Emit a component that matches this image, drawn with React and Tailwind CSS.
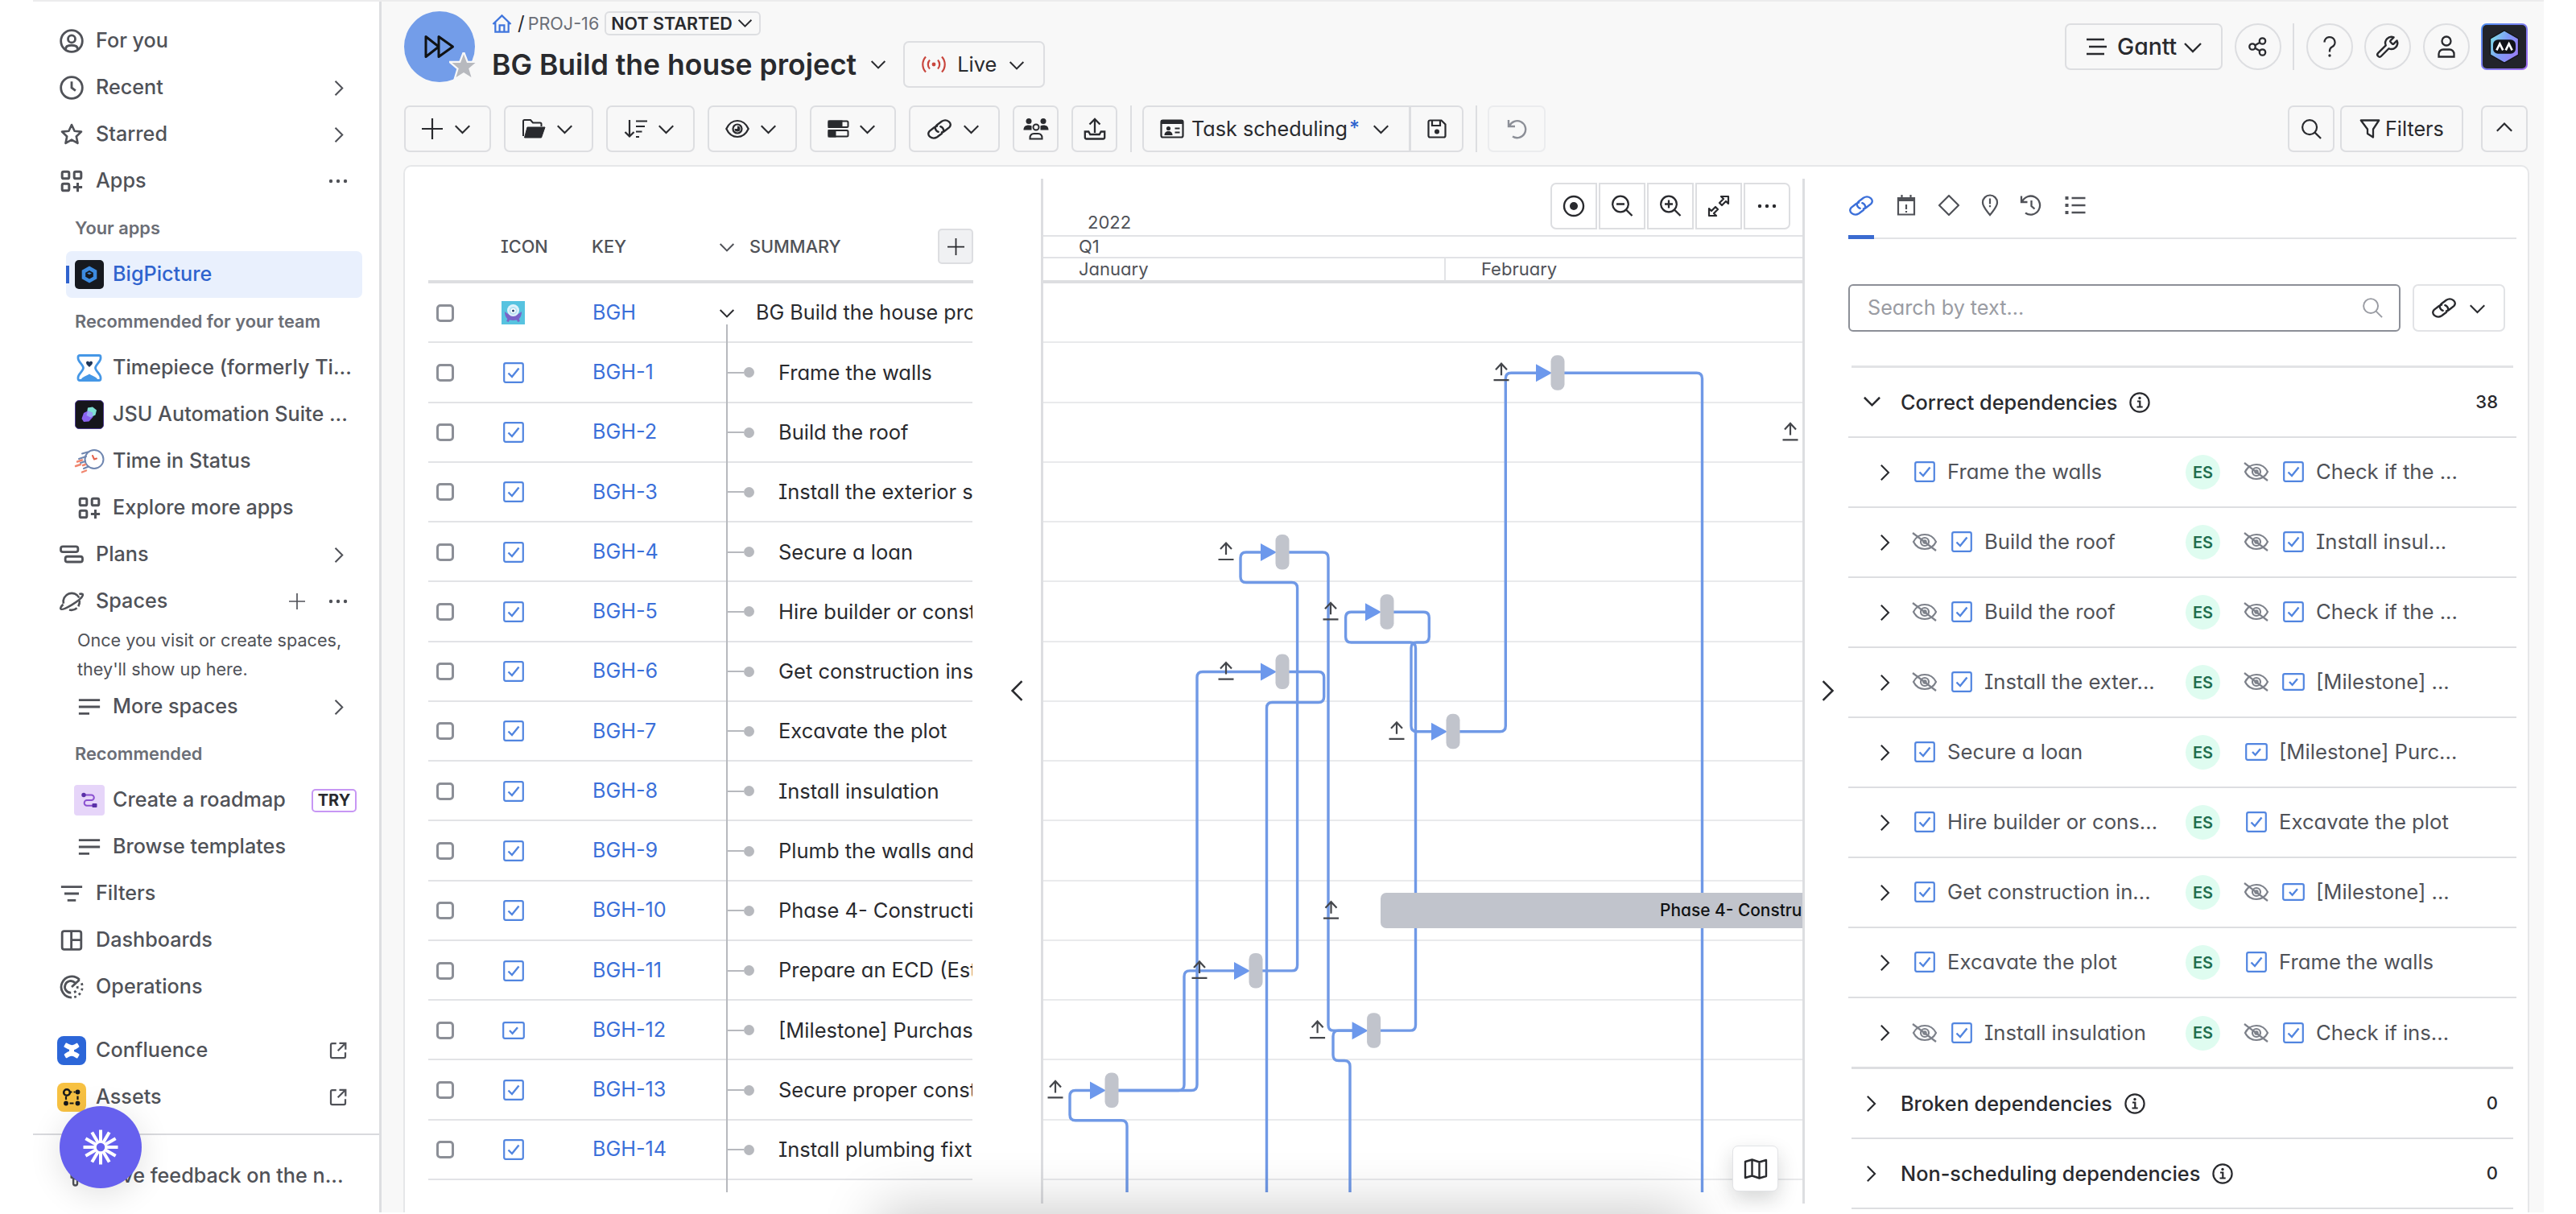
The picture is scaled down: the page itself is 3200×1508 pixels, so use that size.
import React from 'react';

/* ---------- icons ---------- */

function Svg({ w = 30, h, vb = '0 0 16 16', sw = 1.5, fill = 'none', className = '', children }) {
  return (
    <svg
      width={w}
      height={h || w}
      viewBox={vb}
      fill={fill}
      stroke="currentColor"
      strokeWidth={sw}
      strokeLinecap="butt"
      strokeLinejoin="miter"
      className={'shrink-0 ' + className}
    >
      {children}
    </svg>
  );
}

const Chevron = ({ w = 20, dir = 'down', sw = 2.4, className = '' }) => {
  const d = {
    down: 'M2 6 L12 16 L22 6',
    up: 'M2 16 L12 6 L22 16',
    right: 'M7 1 L18 12 L7 23',
    left: 'M18 1 L7 12 L18 23',
  }[dir];
  return (
    <Svg w={w} vb="0 0 24 24" sw={sw} className={className}>
      <path d={d} />
    </Svg>
  );
};

const Dots = ({ className = '' }) => (
  <Svg w={24} h={6} vb="0 0 24 6" fill="currentColor" sw={0} className={className}>
    <circle cx="3" cy="3" r="2.2" />
    <circle cx="12" cy="3" r="2.2" />
    <circle cx="21" cy="3" r="2.2" />
  </Svg>
);

const PersonCircle = () => (
  <Svg>
    <circle cx="8" cy="8" r="7.1" />
    <circle cx="8" cy="6.6" r="2.4" />
    <path d="M4 13.4c0-2 1.400-2.600 4-2.600s4 .6 4 2.600" />
  </Svg>
);

const Clock = () => (
  <Svg>
    <circle cx="8" cy="8" r="7.1" />
    <path d="M8 3.800V8l2.600 1.900" />
  </Svg>
);

const StarOutline = () => (
  <Svg sw={1.4}>
    <path strokeLinejoin="round" d="M8 1.600l1.900 4.100 4.500.5-3.300 3.100.9 4.500L8 11.500l-4 2.300.9-4.500L1.600 6.200l4.500-.5z" />
  </Svg>
);

const AppsIcon = ({ w = 30 }) => (
  <Svg w={w} sw={1.6}>
    <rect x="1.700" y="1.700" width="4.600" height="4.600" rx="1" />
    <rect x="9.700" y="1.700" width="4.600" height="4.600" rx="1" />
    <rect x="1.700" y="9.700" width="4.600" height="4.600" rx="1" />
    <path d="M12 9v6M9 12h6" />
  </Svg>
);

const PlansIcon = () => (
  <Svg>
    <rect x="0.800" y="2.600" width="11.400" height="3.600" rx="1.400" />
    <rect x="3.800" y="9.200" width="11.400" height="3.600" rx="1.400" />
  </Svg>
);

const Planet = () => (
  <Svg sw={1.4}>
    <path d="M2.600 9.500A5.600 5.600 0 0 1 13 5.600" />
    <path d="M11.500 12.400A5.600 5.600 0 0 1 6.400 13.600" />
    <path d="M13 3.200c1.500-.4 2.500-.2 2.400.6-.2 1.700-3.500 4.200-7.300 6.500C4.700 12.300 1.400 13.900.8 13c-.4-.6.300-1.700 1.600-3" />
    <path d="M13.200 7.500A5.600 5.600 0 0 1 12.400 11.300" />
  </Svg>
);

const LinesIcon = () => (
  <Svg>
    <path d="M1 3.500h14M1 8h14M1 12.500h7" />
  </Svg>
);

const FilterLines = () => (
  <Svg>
    <path d="M1 3.500h14M3.200 8h9.600M5.200 12.500h5.600" />
  </Svg>
);

const DashboardIcon = () => (
  <Svg>
    <rect x="1.700" y="1.900" width="12.600" height="12.200" rx="1.400" />
    <path d="M7.800 2v12M7.800 7.800h6.500" />
  </Svg>
);

const OperationsIcon = () => (
  <Svg sw={1.5}>
    <path d="M13.200 3.200A7 7 0 1 0 8 15" />
    <path d="M10.200 5.200A3.900 3.900 0 1 0 7.600 11.800" />
    <path d="M8 8l5.200-4.800" />
    <path strokeDasharray="1.500 1.900" d="M14.600 5.500A7 7 0 0 1 9.500 14.800" />
    <path strokeDasharray="1.500 1.800" d="M11.800 7.500A3.900 3.900 0 0 1 9 11.800" />
  </Svg>
);

const External = () => (
  <Svg w={24} sw={1.5} className="mr-[3px]">
    <path d="M6.500 2H3.200A1.200 1.200 0 0 0 2 3.200v9.600A1.200 1.200 0 0 0 3.200 14h9.600a1.200 1.200 0 0 0 1.200-1.200V9.500M9 1.900h5.200v5.200M14 2L7.800 8.200" />
  </Svg>
);

const Plus = ({ w = 24, sw = 2 }) => (
  <Svg w={w} vb="0 0 24 24" sw={sw}>
    <path d="M12 0v24M0 12h24" />
  </Svg>
);

const BigPictureLogo = () => (
  <div className="flex size-9 items-center justify-center rounded-[5px] bg-[#16191f]">
    <svg width="20" height="22" viewBox="0 0 20 22">
      <path d="M10 .5l9.300 5.200v10.600L10 21.500.7 16.300V5.700z" fill="#3d8be0" />
      <path d="M10 6l4.800 2.700v5L10 16.400l-4.800-2.700v-5z" fill="#16191f" />
      <path d="M7 9.500l3 1.500 3-1.500-3-1.300z" fill="#3d8be0" />
    </svg>
  </div>
);

const Hourglass = () => (
  <svg width="36" height="36" viewBox="0 0 36 36" fill="none">
    <path
      d="M6 2.500h24a2 2 0 0 1 2 2v1.500c0 4.500-6.500 8-6.500 12s6.500 7.500 6.500 12v1.500a2 2 0 0 1-2 2H6a2 2 0 0 1-2-2V30c0-4.500 6.500-8 6.500-12S4 10.500 4 6V4.500a2 2 0 0 1 2-2z"
      stroke="#4597e6"
      strokeWidth="2.800"
      strokeLinejoin="round"
    />
    <path d="M8 32c1-3 6-3.500 10-6.500 4 3 9 3.500 10 6.500z" fill="#4597e6" />
    <path d="M14 11.500c0-2 3-2.500 4-.5 1-2 4-1.500 4 .5 0 2.500-2.500 3.500-4 5.500-1.500-2-4-3-4-5.500z" fill="#1d3557" />
  </svg>
);

const JsuLogo = () => (
  <div className="flex size-9 items-center justify-center rounded-[5px] border border-[#4b3a8f] bg-[#16161c]">
    <svg width="22" height="22" viewBox="0 0 22 22">
      <path d="M9 2.500l6-1 5 4-1.500 6-6 3-5-2.500z" fill="#7fe0d4" />
      <path d="M4 9l5-2.500 5.500 2 1 5.500-5 5.500-6.500.5L1.500 16z" fill="#8a63f0" />
      <path d="M9 6.500l5.500 2 1 4.500-3 1.500-5-2.500z" fill="#9ba4f5" />
    </svg>
  </div>
);

const TimeInStatus = () => (
  <svg width="38" height="34" viewBox="0 0 38 34" fill="none" strokeLinecap="round">
    <circle cx="25" cy="14.500" r="11.500" stroke="#6f86b0" strokeWidth="2" />
    <path d="M25 14.500l-2-4.500M25 14.500l3-1" stroke="#e3614c" strokeWidth="2" />
    <path d="M17 5.500L10 7.500M15 11L6 14M14 17L8 19M18 23.500L12 26" stroke="#6f86b0" strokeWidth="2" />
    <path d="M4 17.500l6-2M2 23l6-2M10 30.500l5-2M11 22l3-1" stroke="#f08770" strokeWidth="2.400" />
  </svg>
);

const RoadmapIcon = () => (
  <div className="flex size-[38px] items-center justify-center rounded-[4px] bg-[#e6d5f9]">
    <svg width="22" height="22" viewBox="0 0 22 22" fill="none">
      <path d="M4 4.500h9.500a3.300 3.300 0 0 1 0 6.600H8a3.300 3.300 0 0 0 0 6.600h9" stroke="#8a4fd0" strokeWidth="2" />
      <circle cx="4" cy="4.500" r="2.700" fill="#5a30a8" />
      <rect x="14.500" y="15" width="6" height="5" rx="1" fill="#5a30a8" />
    </svg>
  </div>
);

const ConfluenceLogo = () => (
  <div className="flex size-9 items-center justify-center rounded-[8px] bg-[#2c66d8]">
    <svg width="22" height="20" viewBox="0 0 22 20" fill="#fff">
      <path d="M1.500 4.500L3.500 1c.3-.5.800-.6 1.300-.4 2.500 1.200 4.500 2.600 6.400 2.600S15 2.200 17 .8c.5-.3 1-.2 1.300.3l2 3.400c.2.5.1.900-.3 1.200C17 8 14.500 9.400 11.200 9.400S5 7.500 1.900 5.700c-.5-.300-.6-.800-.4-1.200z" />
      <path d="M20.500 15.500l-2 3.500c-.3.500-.8.600-1.300.4-2.500-1.200-4.200-2.600-6.200-2.600s-3.800 1-5.900 2.400c-.5.300-1 .2-1.300-.3l-2-3.400c-.2-.5-.1-.9.300-1.200C5 12 7.500 10.600 10.800 10.600s6.200 1.900 9.300 3.700c.5.3.6.8.4 1.200z" />
      <path d="M8 8h6v4H8z" />
    </svg>
  </div>
);

const AssetsLogo = () => (
  <div className="flex size-9 items-center justify-center rounded-[8px] bg-[#f7c142]">
    <svg width="24" height="24" viewBox="0 0 24 24" fill="#16181c" stroke="#16181c">
      <circle cx="6" cy="6" r="3.800" fill="none" strokeWidth="2.600" />
      <circle cx="19.500" cy="5.500" r="2.900" strokeWidth="0" />
      <circle cx="5" cy="19.500" r="2.900" strokeWidth="0" />
      <circle cx="19.500" cy="19.500" r="2.900" strokeWidth="0" />
      <path d="M10 5.500h2.500M14.500 5.500h2M5 11v4M19.500 10.500v4.500M9.500 19.500h5" strokeWidth="2.200" />
    </svg>
  </div>
);

const Megaphone = () => (
  <Svg w={26}>
    <path d="M3.500 5.500L14 1.500v11L3.500 9z M5 9.800v3.800a1.500 1.500 0 0 0 3 0v-2.600" />
  </Svg>
);

const LinkIcon = () => (
  <svg width="32" height="25" viewBox="2.500 2.500 27 27" preserveAspectRatio="none" fill="none" stroke="currentColor" className="shrink-0">
    <path
      strokeLinecap="round"
      strokeWidth="2.400"
      vectorEffect="non-scaling-stroke"
      d="M18.500 20.200c1.300-.4 2-.9 2.900-1.800l5-5a5.700 5.700 0 0 0-8-8l-5 5a5.700 5.700 0 0 0 1.500 9.200M13.500 11.800c-1.300.4-2 .9-2.900 1.800l-5 5a5.700 5.700 0 0 0 8 8l5-5a5.700 5.700 0 0 0-1.500-9.200"
    />
  </svg>
);

const CheckBoxIcon = ({ wide }) =>
  wide ? (
    <Svg w={28} h={22} vb="0 0 28 22" sw={2.200} className="text-[#5185e0]">
      <rect x="1.200" y="1.200" width="25.600" height="19.600" rx="2" />
      <path d="M9 11l3.600 3.800L19 7.200" strokeWidth="2.400" />
    </Svg>
  ) : (
    <Svg w={26} h={26} vb="0 0 26 26" sw={2.200} className="text-[#5185e0]">
      <rect x="1.200" y="1.200" width="23.600" height="23.600" rx="2" />
      <path d="M6.500 13.500l4.500 4.500 8.500-10.500" strokeWidth="2.400" />
    </Svg>
  );

const EyeOff = () => (
  <Svg w={32} h={26} vb="0 0 32 26" sw={2.200} className="text-[#7d818a]">
    <path d="M2 13c3-6 8-9 14-9s11 3 14 9c-3 6-8 9-14 9S5 19 2 13z" />
    <circle cx="16" cy="13" r="5" />
    <circle cx="16" cy="13" r="1.600" />
    <path d="M1 2l29 22" />
  </Svg>
);

const Info = () => (
  <Svg w={26} vb="0 0 26 26" sw={2.200} className="text-[#292a2e]">
    <circle cx="13" cy="13" r="11.600" />
    <path d="M10 11.500h3.300v7M9.500 18.500h7.200" />
    <circle cx="13" cy="7.500" r="1.700" fill="currentColor" strokeWidth="0" />
  </Svg>
);

const Search = ({ w = 28, sw = 2.300 }) => (
  <Svg w={w} vb="0 0 28 28" sw={sw}>
    <circle cx="11.500" cy="11.500" r="9.300" />
    <path d="M18 18l8 8" />
  </Svg>
);

const ZoomGlass = ({ plus }) => (
  <Svg w={28} vb="0 0 28 28" sw={2.300}>
    <circle cx="12" cy="11.500" r="9.800" />
    <path d="M19 18.500l7.500 7.500M7 11.500h10" />
    {plus && <path d="M12 6.500v10" />}
  </Svg>
);

/* ---------- sidebar ---------- */

function NavItem({ icon, label, right, indent, className = '' }) {
  return (
    <div className={'flex h-[58px] items-center pr-[36px] ' + (indent ? 'pl-[51px] ' : 'pl-[29px] ') + className}>
      <div className="flex w-[38px] shrink-0 items-center justify-center">{icon}</div>
      <span className={'text-[25.2px] font-medium whitespace-nowrap ' + (indent ? 'ml-[10px]' : 'ml-[11px]')}>{label}</span>
      <div className="ml-auto flex items-center">{right}</div>
    </div>
  );
}

const NavHeading = ({ children }) => (
  <div className="flex h-[58px] items-center pl-[52px] text-[21.8px] font-semibold whitespace-nowrap text-[#6b6e76]">{children}</div>
);

const RightChevron = () => (
  <div className="mr-[5px]">
    <Chevron w={19} dir="right" sw={2.600} />
  </div>
);

function Sidebar() {
  return (
    <aside className="relative ml-[41px] h-[1506px] w-[433px] shrink-0 border-r-[3px] border-[#dddee1] bg-white pt-[22px] text-[#505258]">
      <NavItem icon={<PersonCircle />} label="For you" />
      <NavItem icon={<Clock />} label="Recent" right={<RightChevron />} />
      <NavItem icon={<StarOutline />} label="Starred" right={<RightChevron />} />
      <NavItem icon={<AppsIcon />} label="Apps" right={<Dots className="mr-[3px]" />} />
      <NavHeading>Your apps</NavHeading>
      <div className="ml-[41px] flex h-[58px] w-[368px] items-center rounded-[7px] bg-[#e9f0fd] text-[#2f63ce]">
        <div className="h-[22px] w-[4px] bg-[#2f63ce]" />
        <div className="ml-[7px]">
          <BigPictureLogo />
        </div>
        <span className="ml-[11px] text-[25.2px] font-medium">BigPicture</span>
      </div>
      <NavHeading>Recommended for your team</NavHeading>
      <NavItem indent icon={<Hourglass />} label="Timepiece (formerly Ti..." className="-mr-[10px]" />
      <NavItem indent icon={<JsuLogo />} label="JSU Automation Suite ..." />
      <NavItem indent icon={<TimeInStatus />} label="Time in Status" />
      <NavItem indent icon={<AppsIcon />} label="Explore more apps" />
      <NavItem icon={<PlansIcon />} label="Plans" right={<RightChevron />} />
      <NavItem
        icon={<Planet />}
        label="Spaces"
        right={
          <div className="mr-[3px] flex items-center gap-[29px]">
            <Plus w={20} />
            <Dots />
          </div>
        }
      />
      <div className="h-[73px] pt-[1px] pl-[55px] text-[21.6px] leading-[36px] whitespace-nowrap">
        Once you visit or create spaces,
        <br />
        they'll show up here.
      </div>
      <NavItem indent icon={<LinesIcon />} label="More spaces" right={<RightChevron />} />
      <NavHeading>Recommended</NavHeading>
      <NavItem
        indent
        icon={<RoadmapIcon />}
        label="Create a roadmap"
        right={
          <div className="-mr-[8px] flex h-[29px] w-[56px] items-center justify-center rounded-[5px] border-2 border-[#c797f4] text-[20px] font-bold text-[#292a2e]">
            TRY
          </div>
        }
      />
      <NavItem indent icon={<LinesIcon />} label="Browse templates" />
      <NavItem icon={<FilterLines />} label="Filters" />
      <NavItem icon={<DashboardIcon />} label="Dashboards" />
      <NavItem icon={<OperationsIcon />} label="Operations" />
      <div className="h-[21px]" />
      <NavItem icon={<ConfluenceLogo />} label="Confluence" right={<External />} />
      <NavItem icon={<AssetsLogo />} label="Assets" right={<External />} />
      <div className="mt-[16px] mb-[22px] h-[2px] bg-[#d9dadd]" />
      <NavItem icon={<Megaphone />} label="Give feedback on the n..." className="pl-[36px]! pr-0!" />
      <div className="absolute top-[1374px] left-[33px] flex size-[102px] items-center justify-center rounded-full bg-[#6660ee] shadow-[0_8px_40px_rgba(0,0,0,0.12)]">
        <svg width="44" height="44" viewBox="-22 -22 44 44" stroke="#fff" strokeWidth="4">
          {[0, 30, 60, 90, 120, 150, 180, 210, 240, 270, 300, 330].map((a) => (
            <path key={a} d="M6 0H21.500" transform={`rotate(${a})`} />
          ))}
          <circle r="6.500" fill="#6660ee" strokeWidth="2.500" />
        </svg>
      </div>
    </aside>
  );
}

/* ---------- header ---------- */

const btn = 'flex h-[58px] shrink-0 items-center rounded-[7px] border-2 border-[#dddee1] bg-[#f8f8f8]';

function Header() {
  return (
    <header className="flex h-[117px] items-start">
      <div className="relative mt-[14px] ml-[28px] flex size-[88px] items-center justify-center rounded-full bg-[#739de9] text-[#101214]">
        <Svg w={40} h={30} vb="0 0 40 30" sw={3}>
          <path strokeLinejoin="round" d="M3 2.500v25L19 15z M19 2.500v25L36.500 15z" />
        </Svg>
        <svg width="36" height="34" viewBox="0 0 36 34" className="absolute top-[51px] left-[56px]">
          <path
            d="M18 2.500l4 10.500h10.500l-8.300 7 3.300 11L18 25l-9.500 6 3.300-11-8.300-7H14z"
            fill="#b7b9be"
            stroke="#f8f8f8"
            strokeWidth="4.500"
            paintOrder="stroke"
          />
        </svg>
      </div>
      <div className="ml-[21px] flex flex-col">
        <div className="mt-[14px] flex h-[30px] items-center">
          <Svg w={25} vb="0 0 26 26" sw={2.300} className="text-[#3f75dd]">
            <path d="M1.500 13.500L13 2.500l11.500 11M4.500 11v12.500h17V11M10 23v-8h6v8" />
          </Svg>
          <span className="ml-[7px] text-[24px]">/</span>
          <span className="ml-[4px] text-[21.6px] text-[#6b6e76]">PROJ-16</span>
          <div className="ml-[7px] flex h-[30px] w-[194px] items-center rounded-[6px] border-2 border-[#dddee1] pl-[6px] text-[21.500px] font-semibold whitespace-nowrap">
            NOT STARTED
            <Chevron w={19} className="ml-[6px]" />
          </div>
        </div>
        <div className="mt-[7px] flex h-[58px] items-center">
          <span className="pt-[1px] text-[35.5px] font-semibold whitespace-nowrap">BG Build the house project</span>
          <Chevron w={20} className="mt-[2px] ml-[17px]" />
          <div className={btn + ' ml-[21px] w-[176px]'}>
            <Svg w={32} vb="0 0 32 32" sw={2.200} className="ml-[20px] text-[#c9463d]">
              <circle cx="16" cy="16" r="2.400" fill="currentColor" strokeWidth="0" />
              <path d="M11 10.500a8 8 0 0 0 0 11M21 10.500a8 8 0 0 1 0 11M6 6.500a14 14 0 0 0 0 19M26 6.500a14 14 0 0 1 0 19" />
            </Svg>
            <span className="ml-[13px] text-[25.400px]">Live</span>
            <Chevron w={20} className="mt-[3px] ml-[15px]" />
          </div>
        </div>
      </div>
      <div className="mt-[29px] mr-[20px] ml-auto flex items-center text-[#292a2e]">
        <div className={btn + ' w-[196px] pl-[24px]'}>
          <Svg w={27} h={24} vb="0 0 27 24" sw={2.600}>
            <path d="M1 3h22M4 12h22M1 21h22" />
          </Svg>
          <span className="ml-[12px] text-[28.3px] font-medium">Gantt</span>
          <Chevron w={24} className="mt-[4px] ml-[8px]" />
        </div>
        <div className={btn + ' ml-[15px] w-[58px] justify-center rounded-full'}>
          <Svg w={26} vb="0 0 26 26" sw={2.300}>
            <circle cx="6" cy="13" r="3.700" />
            <circle cx="18.500" cy="6" r="3.700" />
            <circle cx="18.500" cy="20" r="3.700" />
            <path d="M9.300 11.200l6-3.400M9.300 14.800l6 3.400" />
          </Svg>
        </div>
        <div className="ml-[14px] h-[58px] w-[2px] bg-[#dddee1]" />
        <div className={btn + ' ml-[15px] w-[58px] justify-center rounded-full'}>
          <Svg w={24} h={28} vb="0 0 24 28" sw={2.300}>
            <path d="M5.500 8.500a6.500 6.500 0 1 1 9.500 5.800c-2 1.100-3 2-3 4.700v1.500" />
            <circle cx="12" cy="25" r="1.700" fill="currentColor" strokeWidth="0" />
          </Svg>
        </div>
        <div className={btn + ' ml-[14px] w-[58px] justify-center rounded-full'}>
          <Svg w={32} vb="0 0 24 24" sw={1.800}>
            <path
              strokeLinejoin="round"
              d="M14.700 6.300a1 1 0 0 0 0 1.400l1.600 1.600a1 1 0 0 0 1.400 0l3-3a5.700 5.700 0 0 1-7.600 7.400L6 20.800a2 2 0 0 1-2.900-2.900l7.200-7.100a5.700 5.700 0 0 1 7.400-7.500z"
            />
          </Svg>
        </div>
        <div className={btn + ' ml-[15px] w-[58px] justify-center rounded-full'}>
          <Svg w={24} h={28} vb="0 0 24 28" sw={2.300}>
            <circle cx="12" cy="7" r="5.500" />
            <path d="M2.500 26.500v-3.500a5.500 5.500 0 0 1 5.500-5.500h8a5.500 5.500 0 0 1 5.500 5.500v3.500z" />
          </Svg>
        </div>
        <div className="ml-[14px] size-[58px] rounded-[7px] bg-linear-to-br from-[#4a8df0] to-[#a06bf0] p-[2px]">
          <div className="flex size-full items-center justify-center rounded-[5px] bg-[#22242b]">
            <svg width="40" height="42" viewBox="0 0 44 48">
              <defs>
                <linearGradient id="hex" x1="0" y1="0.200" x2="1" y2="0.700">
                  <stop offset="0" stopColor="#7fe0e6" />
                  <stop offset="0.500" stopColor="#7f9bf8" />
                  <stop offset="1" stopColor="#9a7df5" />
                </linearGradient>
              </defs>
              <path d="M22 1l20 11.500v23L22 47 2 35.500v-23z" fill="url(#hex)" stroke="#14161b" strokeWidth="1.500" />
              <rect x="6" y="14" width="32" height="20" rx="7" fill="#101217" />
              <path d="M11 29l4.500-9 4.500 9M24 29l4.500-9 4.500 9" fill="none" stroke="#fff" strokeWidth="3" />
            </svg>
          </div>
        </div>
      </div>
    </header>
  );
}

function DropBtn({ w, children }) {
  return (
    <div className={btn + ' justify-between pr-[23px] pl-[20px] ' + w}>
      {children}
      <Chevron w={21} className="mt-[3px]" />
    </div>
  );
}

function Toolbar() {
  return (
    <div className="flex h-[88px] items-start gap-[16px] pt-[14px] pr-[20px] pl-[28px] text-[#292a2e]">
      <DropBtn w="w-[108px]">
        <Plus w={26} />
      </DropBtn>
      <DropBtn w="w-[111px]">
        <Svg w={30} h={26} vb="0 0 30 26" sw={2}>
          <path d="M2 22V3.500A1.500 1.500 0 0 1 3.500 2H11l3 3.500h9A1.500 1.500 0 0 1 24.500 7v3" />
          <path d="M7 11h22l-4.500 13H3.500z" fill="currentColor" strokeWidth="1" strokeLinejoin="round" />
        </Svg>
      </DropBtn>
      <DropBtn w="w-[110px]">
        <Svg w={30} h={26} vb="0 0 30 26" sw={2.200}>
          <path d="M7 2v20M1.500 17L7 22.500l5.500-5.500M15 3.500h14M15 10h11M15 16.500h7.500M15 23h4" />
        </Svg>
      </DropBtn>
      <DropBtn w="w-[111px]">
        <Svg w={30} h={26} vb="0 0 30 26" sw={2.200}>
          <path d="M1.300 13c3-6.500 8-10 13.700-10s10.700 3.500 13.700 10c-3 6.500-8 10-13.700 10S4.300 19.500 1.300 13z" />
          <circle cx="15" cy="13" r="5.500" />
          <path d="M15 9.500v3.500h-3.500a3.500 3.500 0 1 0 3.500-3.500z" fill="currentColor" strokeWidth="0" />
        </Svg>
      </DropBtn>
      <DropBtn w="w-[107px]">
        <Svg w={27} h={22} vb="0 0 26 22" sw={2}>
          <rect x="1" y="1.500" width="24" height="7.500" rx="1.500" />
          <path d="M1 1.500h16v7.500H1z" fill="currentColor" />
          <rect x="1" y="13" width="24" height="7.500" rx="1.500" />
          <path d="M1 13h8v7.500H1z" fill="currentColor" />
        </Svg>
      </DropBtn>
      <DropBtn w="w-[113px]">
        <LinkIcon />
      </DropBtn>
      <div className={btn + ' w-[57px] justify-center'}>
        <Svg w={32} h={28} vb="0 0 32 28" sw={2}>
          <circle cx="7" cy="4.500" r="3.500" fill="currentColor" strokeWidth="0" />
          <circle cx="25" cy="4.500" r="3.500" fill="currentColor" strokeWidth="0" />
          <path d="M.5 15.500c0-4 2-6 6.500-6 2.500 0 3.500 1 3.500 1v5zM31.500 15.500c0-4-2-6-6.500-6-2.500 0-3.500 1-3.500 1v5z" fill="currentColor" strokeWidth="0" />
          <circle cx="16" cy="12" r="3.500" />
          <path d="M8.500 26.500v-1c0-3.500 2-5.500 5-5.500h5c3 0 5 2 5 5.500v1z" />
        </Svg>
      </div>
      <div className={btn + ' w-[57px] justify-center'}>
        <Svg w={28} h={28} vb="0 0 28 28" sw={2.300}>
          <path d="M14 19V2.500M7.500 8.500L14 2l6.500 6.500M1.800 17.500v7a2 2 0 0 0 2 2h20.400a2 2 0 0 0 2-2v-7h-4.500l-2 3.500h-11.400l-2-3.500z" />
        </Svg>
      </div>
      <div className="-mr-[3px] h-[58px] w-[2px] shrink-0 bg-[#dddee1]" />
      <div className="flex">
        <div className={btn + ' w-[333px] rounded-r-none pl-[20px]'}>
          <Svg w={30} h={24} vb="0 0 30 24" sw={2.200}>
            <rect x="1.500" y="1.500" width="27" height="21" rx="2" />
            <path d="M1.500 3.500h27" strokeWidth="5" />
            <circle cx="10.500" cy="11.500" r="2.600" fill="currentColor" strokeWidth="0" />
            <path d="M5.500 20c0-3.500 2-5 5-5s5 1.500 5 5z" fill="currentColor" strokeWidth="0" />
            <path d="M18.500 11.500h6M18.500 16.500h6" />
          </Svg>
          <span className="ml-[9px] pt-[1px] text-[25.200px] whitespace-nowrap">Task scheduling</span>
          <span className="ml-[2px] text-[25px] font-medium text-[#2f63ce]">*</span>
          <Chevron w={21} className="mt-[3px] ml-[16px]" />
        </div>
        <div className={btn + ' w-[66px] justify-center rounded-l-none border-l'}>
          <Svg w={24} vb="0 0 24 24" sw={2.200}>
            <path d="M1.500 3.500a2 2 0 0 1 2-2h14l5 5v14a2 2 0 0 1-2 2h-17a2 2 0 0 1-2-2zM6 2v6h10V2" />
            <circle cx="12" cy="15.500" r="3" fill="currentColor" strokeWidth="0" />
          </Svg>
        </div>
      </div>
      <div className="-mr-[3px] -ml-[1px] h-[58px] w-[2px] shrink-0 bg-[#dddee1]" />
      <div className={btn + ' w-[72px] justify-center border-[#ebecee] text-[#8c8f97]'}>
        <Svg w={26} vb="0 0 26 26" sw={2.400}>
          <path d="M4 9.500A10.500 10.500 0 1 1 8 22.500M3 2v8h8" />
        </Svg>
      </div>
      <div className="ml-auto flex">
        <div className={btn + ' w-[58px] justify-center'}>
          <Search w={27} />
        </div>
        <div className={btn + ' ml-[7px] w-[153px] pl-[22px]'}>
          <Svg w={26} h={26} vb="0 0 26 26" sw={2.300}>
            <path strokeLinejoin="round" d="M1.800 2.500h22.400L17 13.500v10l-7-4.500v-5.500z" />
          </Svg>
          <span className="ml-[6px] pt-[1px] text-[25.200px]">Filters</span>
        </div>
        <div className={btn + ' ml-[22px] w-[58px] justify-center'}>
          <Chevron w={22} dir="up" className="-mt-[3px]" />
        </div>
      </div>
    </div>
  );
}

/* ---------- task table ---------- */

const TASKS = [
  ['BGH-1', 'Frame the walls'],
  ['BGH-2', 'Build the roof'],
  ['BGH-3', 'Install the exterior s'],
  ['BGH-4', 'Secure a loan'],
  ['BGH-5', 'Hire builder or const'],
  ['BGH-6', 'Get construction ins'],
  ['BGH-7', 'Excavate the plot'],
  ['BGH-8', 'Install insulation'],
  ['BGH-9', 'Plumb the walls and'],
  ['BGH-10', 'Phase 4- Constructi'],
  ['BGH-11', 'Prepare an ECD (Est'],
  ['BGH-12', '[Milestone] Purchas', true],
  ['BGH-13', 'Secure proper const'],
  ['BGH-14', 'Install plumbing fixt'],
];

const rowCls = 'flex h-[74.27px] w-[676px] items-center overflow-hidden border-b-2 border-[#e2e3e6] pt-[1px]';

const Tick = () => <div className="ml-[10px] size-[22px] shrink-0 rounded-[5px] border-[3px] border-[#8c8f97]" />;

function TaskTable() {
  return (
    <section className="w-[790px] shrink-0 pl-[29px]">
      <div className="flex h-[145px] w-[677px] items-center border-b-4 border-[#dddee1] pt-[57px] text-[21.700px] font-medium text-[#505258]">
        <span className="ml-[90px] w-[113px]">ICON</span>
        <span className="w-[158px]">KEY</span>
        <Chevron w={20} className="mt-[3px]" />
        <span className="ml-[18px]">SUMMARY</span>
        <div className="ml-auto flex h-[44px] w-[44px] items-center justify-center rounded-[5px] border-2 border-[#dddee1] bg-[#f0f1f3] text-[#292a2e]">
          <Plus w={21} />
        </div>
      </div>
      <div className="relative">
        <div className={rowCls}>
          <Tick />
          <svg width="29" height="29" viewBox="0 0 29 29" className="ml-[59px] shrink-0">
            <rect width="29" height="29" fill="#57c3e0" />
            <path d="M4 13c0 8 4 11 10.500 11S25 21 25 13c-3 3-7 4-10.500 4S7 16 4 13z" fill="#7a63c8" />
            <circle cx="14.500" cy="11.500" r="7.500" fill="#dff2fb" />
            <circle cx="14.500" cy="12" r="5" fill="#b8e2f2" />
            <circle cx="14.500" cy="12" r="3" fill="#fff" />
            <circle cx="14.500" cy="12" r="1.500" fill="#28406b" />
            <path d="M9 22l-1.500 3.500M20 22l1.500 3.500" stroke="#7a63c8" strokeWidth="3" />
          </svg>
          <span className="ml-[84px] w-[157px] shrink-0 text-[25.200px] text-[#3b6fd9]">BGH</span>
          <Chevron w={20} className="mt-[3px]" />
          <span className="ml-[26px] text-[25.200px] whitespace-nowrap">BG Build the house pro</span>
        </div>
        {TASKS.map(([k, s, m]) => (
          <div key={k} className={rowCls}>
            <Tick />
            <div className="ml-[56px] flex w-[35px] shrink-0 justify-center">
              <CheckBoxIcon wide={m} />
            </div>
            <span className="ml-[81px] w-[166px] shrink-0 text-[25.200px] text-[#3b6fd9]">{k}</span>
            <div className="h-[2px] w-[22px] shrink-0 bg-[#b7b9be]" />
            <div className="size-[13px] shrink-0 rounded-full bg-[#b7b9be]" />
            <span className="ml-[30px] text-[25.500px] whitespace-nowrap">{s}</span>
          </div>
        ))}
        <div className="absolute top-[51px] left-[370px] h-[1078px] w-[2px] bg-[#b7b9be]" />
      </div>
    </section>
  );
}

/* ---------- gantt chart ---------- */

const rowY = (n) => 111.200 + 74.27 * (n - 1);

const BARS = [
  [1, 639],
  [4, 297],
  [5, 427],
  [6, 297],
  [7, 509],
  [11, 264],
  [12, 410.600],
  [13, 85],
];

const CONSTRAINTS = [...BARS.map(([n, x]) => [n, x - 70]), [2, 928], [10, 357.500]];

const LINKS = [
  [[647, rowY(1)], [818.500, rowY(1)], [818.500, 1129]],
  [[517, rowY(7)], [574.300, rowY(7)], [574.300, rowY(1)], [613, rowY(1)]],
  [[305, rowY(4)], [354, rowY(4)], [354, rowY(12)], [385, rowY(12)]],
  [[272, rowY(11)], [315.600, rowY(11)], [315.600, 371.500], [245, 371.500], [245, rowY(4)], [271, rowY(4)]],
  [[435, rowY(5)], [479.300, rowY(5)], [479.300, 446], [457, 446], [457, rowY(7)], [483, rowY(7)]],
  [[418, rowY(12)], [462.500, rowY(12)], [462.500, 446], [375.600, 446], [375.600, rowY(5)], [401, rowY(5)]],
  [[305, rowY(6)], [348.700, rowY(6)], [348.700, 520.500], [277.500, 520.500], [277.500, 1129]],
  [[93, rowY(13)], [191, rowY(13)], [191, rowY(6)], [271, rowY(6)]],
  [[93, rowY(13)], [175, rowY(13)], [175, rowY(11)], [239, rowY(11)]],
  [[381, 1129], [381, 965.500], [360, 965.500], [360, rowY(12)], [385, rowY(12)]],
  [[104, 1129], [104, 1039.700], [33, 1039.700], [33, rowY(13)], [59, rowY(13)]],
];

/* Orthogonal polyline with rounded corners. */
function roundPath(pts, r = 7) {
  let d = `M${pts[0][0]} ${pts[0][1]}`;
  for (let i = 1; i < pts.length - 1; i++) {
    const [px, py] = pts[i - 1];
    const [x, y] = pts[i];
    const [nx, ny] = pts[i + 1];
    const ax = x - Math.sign(x - px) * r;
    const ay = y - Math.sign(y - py) * r;
    const bx = x + Math.sign(nx - x) * r;
    const by = y + Math.sign(ny - y) * r;
    d += ` L${ax} ${ay} Q${x} ${y} ${bx} ${by}`;
  }
  const e = pts[pts.length - 1];
  return d + ` L${e[0]} ${e[1]}`;
}

const zoomBtn = 'flex h-[58px] w-[58px] items-center justify-center border-2 border-[#dddee1]';

function Gantt() {
  return (
    <section className="relative mt-[15px] h-[1273px] w-[949px] shrink-0 border-x-[3px] border-[#dddee1]">
      <div className="flex h-[130px] flex-col border-b-4 border-[#dddee1] text-[22px] text-[#505258]">
        <div className="flex h-[72px] items-end justify-between border-b-2 border-[#e2e3e6] pr-[15px] pl-[55px]">
          <span className="leading-[31px]">2022</span>
          <div className="mb-[7px] flex gap-[2px] text-[#292a2e]">
            <div className={zoomBtn + ' rounded-l-[7px]'}>
              <Svg w={28} vb="0 0 28 28" sw={2.400}>
                <circle cx="14" cy="14" r="12" />
                <circle cx="14" cy="14" r="5" fill="currentColor" strokeWidth="0" />
              </Svg>
            </div>
            <div className={zoomBtn}>
              <ZoomGlass />
            </div>
            <div className={zoomBtn}>
              <ZoomGlass plus />
            </div>
            <div className={zoomBtn}>
              <Svg w={28} vb="0 0 28 28" sw={2.200}>
                <path strokeLinejoin="round" d="M17 2h9v9l-3-3-5 5-3-3 5-5zM11 26H2v-9l3 3 5-5 3 3-5 5z" />
              </Svg>
            </div>
            <div className={zoomBtn + ' rounded-r-[7px]'}>
              <Dots />
            </div>
          </div>
        </div>
        <div className="flex h-[27px] items-center border-b-2 border-[#e2e3e6] pl-[44px]">Q1</div>
        <div className="flex h-[27px] items-stretch leading-[26px]">
          <div className="w-[500px] border-r-2 border-[#e2e3e6] pl-[44px]">January</div>
          <div className="pl-[44px]">February</div>
        </div>
      </div>
      <div className="relative h-[1129px] overflow-hidden">
        {Array.from({ length: 15 }, (_, i) => (
          <div key={i} className="h-[74.27px] border-b-2 border-[#e9eaec]" />
        ))}
        <svg width="943" height="1129" viewBox="0 0 943 1129" className="absolute top-0 left-0" fill="none">
          {LINKS.map((p, i) => (
            <path key={i} d={roundPath(p)} stroke="#7099e6" strokeWidth="3.400" />
          ))}
          {BARS.map(([n, x]) => (
            <g key={n}>
              <path d={`M${x - 27} ${rowY(n) - 11} L${x - 7} ${rowY(n)} L${x - 27} ${rowY(n) + 11}z`} fill="#6c98ec" />
              <rect x={x - 8.500} y={rowY(n) - 22} width="17" height="43.500" rx="7.500" fill="#c1c4cc" />
            </g>
          ))}
          {CONSTRAINTS.map(([n, x]) => (
            <path
              key={n}
              transform={`translate(${x} ${rowY(n)})`}
              d="M0 3V-11M-7 -4L0 -11.500L7 -4M-9.500 9H9.500"
              stroke="#44464b"
              strokeWidth="2.200"
            />
          ))}
        </svg>
        <div className="absolute top-[757px] left-[419px] flex h-[44px] w-[524px] items-center rounded-l-[7px] bg-[#c1c4cc] pl-[347px] text-[20.900px] font-medium whitespace-nowrap text-[#101214]">
          Phase 4- Constru
        </div>
      </div>
      <div className="absolute top-[1201px] left-[856px] flex size-[57px] items-center justify-center rounded-[7px] border border-[#e2e3e6] bg-white shadow-[0_10px_24px_rgba(30,31,33,0.18)]">
        <Svg w={30} h={26} vb="0 0 30 26" sw={2.400}>
          <path strokeLinejoin="round" d="M2 4l8.500-2.500 9 3L28 2v20l-8.500 2.500-9-3L2 24zM10.500 1.500v20M19.500 4.500v20" />
        </Svg>
      </div>
    </section>
  );
}

/* ---------- dependencies panel ---------- */

const DEPS = [
  [false, 'Frame the walls', true, false, 'Check if the ...'],
  [true, 'Build the roof', true, false, 'Install insul...'],
  [true, 'Build the roof', true, false, 'Check if the ...'],
  [true, 'Install the exter...', true, true, '[Milestone] ...'],
  [false, 'Secure a loan', false, true, '[Milestone] Purc...'],
  [false, 'Hire builder or cons...', false, false, 'Excavate the plot'],
  [false, 'Get construction in...', true, true, '[Milestone] ...'],
  [false, 'Excavate the plot', false, false, 'Frame the walls'],
  [true, 'Install insulation', true, false, 'Check if ins...'],
];

function DepEnd({ hidden, wide, label }) {
  return (
    <div className="flex items-center">
      {hidden && (
        <div className="mr-[14px]">
          <EyeOff />
        </div>
      )}
      <div className="flex w-[32px] justify-center">
        <CheckBoxIcon wide={wide} />
      </div>
      <span className="ml-[12px] text-[25.700px] whitespace-nowrap text-[#505258]">{label}</span>
    </div>
  );
}

function Group({ open, title, count, className = 'h-[87px]' }) {
  return (
    <div className={'mx-[4px] flex items-center pr-[19px] pl-[14px] text-[25.300px] font-medium ' + className}>
      <Chevron w={open ? 23 : 20} dir={open ? 'down' : 'right'} sw={2.600} />
      <span className={'mr-[15px] ' + (open ? 'ml-[24px]' : 'ml-[27px]')}>{title}</span>
      <Info />
      <span className="ml-auto text-[22px]">{count}</span>
    </div>
  );
}

function Dependencies() {
  return (
    <section className="h-[1302px] w-[890px] shrink-0 overflow-hidden pr-[6px] pl-[54px]">
      <div className="relative flex h-[90px] w-[830px] items-center border-b-2 border-[#e2e3e6] pt-[8px] text-[#505258]">
        <span className="text-[#3b6fd9]">
          <LinkIcon />
        </span>
        <Svg w={24} h={28} vb="0 0 24 28" sw={2.200} className="ml-[28px]">
          <path d="M2 5h20v20.500H2zM6.500 1v5M17.500 1v5M12 13v6M12 21v2" />
          <path d="M2 7h20" strokeWidth="4" />
        </Svg>
        <Svg w={28} vb="0 0 28 28" sw={2.200} className="ml-[27px]">
          <path strokeLinejoin="round" d="M14 2l12 12-12 12L2 14z" />
        </Svg>
        <Svg w={22} h={28} vb="0 0 22 28" sw={2.200} className="ml-[26px]">
          <path d="M11 26C5 19 2 15 2 10.500a9 9 0 0 1 18 0C20 15 17 19 11 26zM11 5.500v7M11 14v2.200" />
        </Svg>
        <Svg w={28} vb="0 0 28 28" sw={2.300} className="ml-[26px]">
          <path d="M3 9.500A11.500 11.500 0 1 1 7 23.500M2 2.500V10h7.500M14.500 8v7l4 3.500" />
        </Svg>
        <Svg w={26} h={24} vb="0 0 26 24" sw={2.400} className="ml-[28px]">
          <path d="M8.500 3h17M8.500 12h17M8.500 21h17" />
          <path d="M.5 3h4M.5 12h4M.5 21h4" strokeWidth="4" />
        </Svg>
        <div className="absolute -bottom-[2px] left-0 h-[5px] w-[32px] bg-[#3b6bd0]" />
      </div>
      <div className="mt-[56px] flex">
        <div className="flex h-[59px] w-[686px] items-center justify-between rounded-[6px] border-2 border-[#8c8f97] pr-[19px] pl-[22px] text-[25.200px] text-[#9a9ca3]">
          Search by text...
          <Search w={27} sw={2} />
        </div>
        <div className="ml-[15px] flex h-[59px] w-[115px] items-center justify-between rounded-[7px] border-2 border-[#e2e3e6] pr-[22px] pl-[21px]">
          <LinkIcon />
          <Chevron w={21} className="mt-[3px]" />
        </div>
      </div>
      <div className="mx-[4px] mt-[42px] h-[3px] w-[822px] bg-[#e2e3e6]" />
      <div className="w-[830px]">
        <Group open title="Correct dependencies" count="38" className="h-[85px]" />
        <div className="border-t-2 border-[#dddee1]">
          {DEPS.map(([h1, a, h2, wide, b], i) => (
            <div key={i} className={'flex items-center pl-[35px] ' + (i < 8 ? 'h-[87px] border-b-2 border-[#dddee1]' : 'h-[86px]')}>
              <Chevron w={20} dir="right" sw={2.500} />
              <div className="ml-[24px] w-[340px]">
                <DepEnd hidden={h1} label={a} />
              </div>
              <div className="flex size-[43px] items-center justify-center rounded-full bg-[#dffcf0] text-[20px] font-semibold text-[#216e4e]">ES</div>
              <div className="ml-[29px]">
                <DepEnd hidden={h2} wide={wide} label={b} />
              </div>
            </div>
          ))}
        </div>
        <div className="mx-[4px] -mt-[1px] h-[3px] bg-[#dddee1]" />
        <Group title="Broken dependencies" count="0" className="h-[87px] border-b-2 border-[#dddee1]" />
        <Group title="Non-scheduling dependencies" count="0" className="h-[87px] border-b-2 border-[#dddee1]" />
      </div>
    </section>
  );
}

export default function App() {
  return (
    <div className="relative h-[1508px] w-[3200px] overflow-hidden bg-white font-['Inter',sans-serif] text-[#292a2e]">
      <div className="flex h-[1506px]">
        <Sidebar />
        <main className="w-[2686px] shrink-0 bg-[#f8f8f8] [font-feature-settings:'cv11','cv08']">
          <Header />
          <Toolbar />
          <div className="ml-[27px] flex h-[1301px] w-[2641px] overflow-hidden rounded-t-[10px] border-2 border-b-0 border-[#e6e7e9] bg-white">
            <TaskTable />
            <Gantt />
            <Dependencies />
          </div>
        </main>
      </div>
      <div className="absolute top-0 left-[41px] h-[2px] w-[3119px] bg-[#ececed]" />
      <Chevron w={26} dir="left" sw={2.300} className="absolute top-[845px] left-[1250px]" />
      <Chevron w={26} dir="right" sw={2.300} className="absolute top-[845px] left-[2257px]" />
      <div className="pointer-events-none absolute top-[1530px] left-[1120px] h-[40px] w-[950px] shadow-[0_0_70px_30px_rgba(0,0,0,0.2)]" />
    </div>
  );
}
